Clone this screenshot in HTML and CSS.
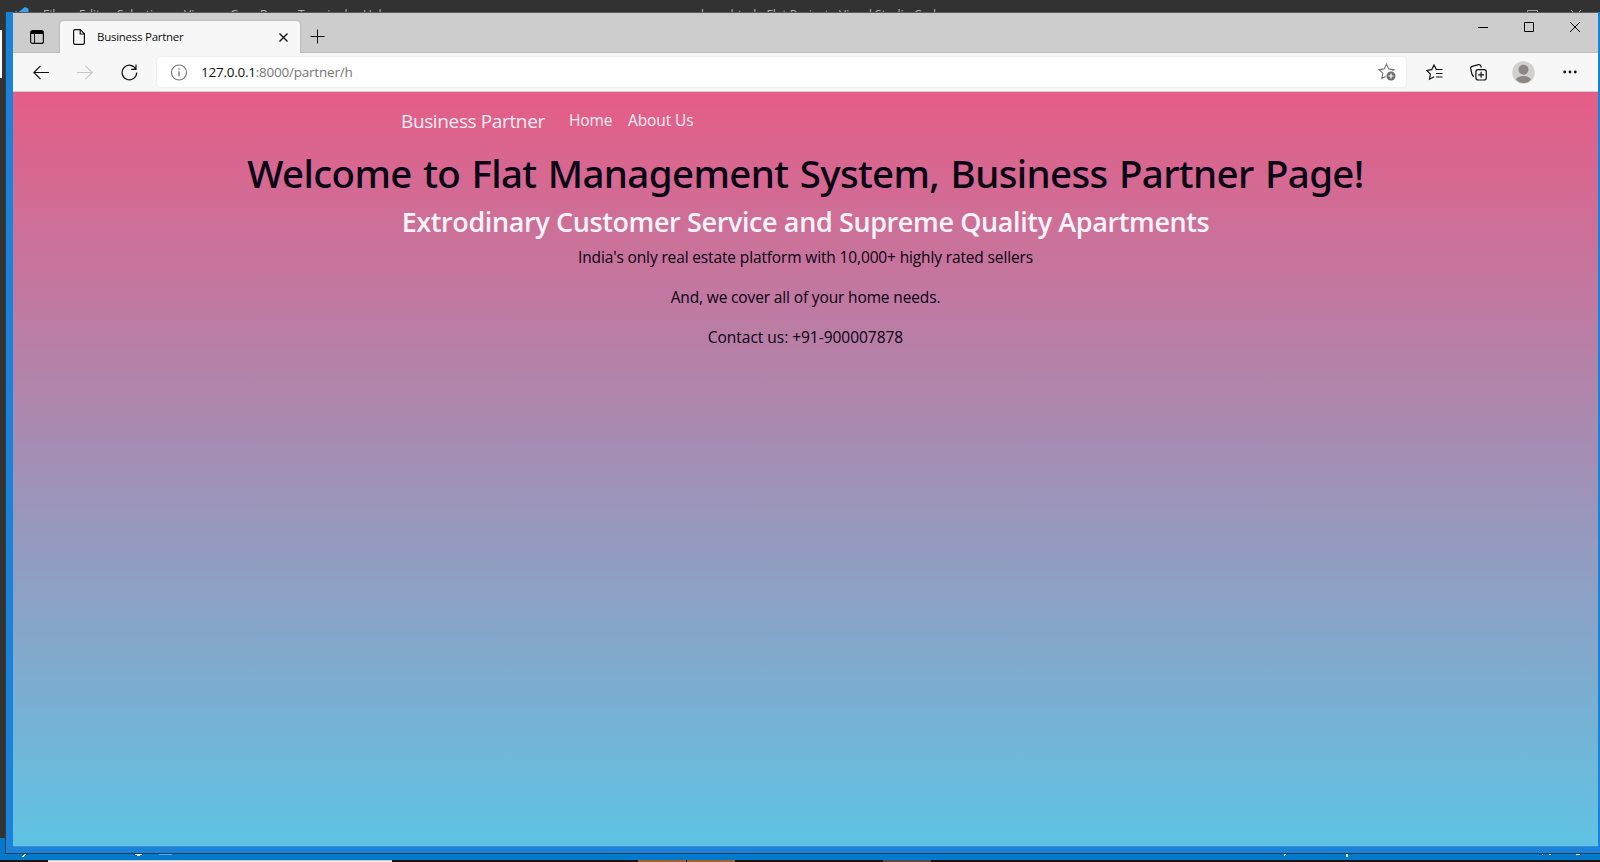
FILE: index.html
```html
<!DOCTYPE html>
<html lang="en">
<head>
<meta charset="utf-8">
<title>Business Partner</title>
<link rel="stylesheet" href="styles.css">
</head>
<body>
<div class="desktop">
  <div class="editor">
    <div class="menubar">
      <svg class="code-logo" width="14" height="14" viewBox="0 0 14 14"><path d="M10 0l3.500 1.700v10.600L10 14 3 8.500 1.200 10 0 9.300V4.700L1.200 4 3 5.500z" fill="#3ba3ea"/></svg>
      <span class="m-file">File</span><span class="m-edit">Edit</span><span class="m-selection">Selection</span><span class="m-view">View</span><span class="m-go">Go</span><span class="m-run">Run</span><span class="m-terminal">Terminal</span><span class="m-help">Help</span>
      <span class="editor-title">base.html - Flat Project - Visual Studio Code</span>
      <svg width="60" height="12" viewBox="0 0 60 12" fill="none" stroke="#a5a5a5"><path d="M2.500.500h10v8h-10zM46 0l9 9M56 0l-9 9"/></svg>
    </div>
    <div class="editor-body"><div class="activity-mark"></div></div>
    <div class="statusbar">
      <svg width="1600" height="4" viewBox="0 0 1600 4"><path d="M24 0h2v1h-1v1h-1v1h-2v-1h1v-1h1zM135 0h7v1h-2v1h-3v-1h-2zM1346 0h2v3h-2zM1284 0h2v1h-1v1h-1zM1542 0h1v1h-1zM1549 0h2v1h-2zM1576 0h4v1h-4z" fill="#fff"/><path d="M159 0h13v1h-13z" fill="#5fa9df"/></svg>
    </div>
    <div class="taskbar"><i class="search"></i><i class="task"></i><i class="task"></i><i class="task dim"></i></div>
  </div>

  <div class="browser">
    <div class="frame-left"></div>
    <div class="browser-main">
      <header class="titlebar">
        <svg class="workspaces" width="14" height="14" viewBox="0 0 14 14"><rect x=".6" y=".6" width="12.800" height="12.800" rx="2" fill="none" stroke="#111" stroke-width="1.200"/><path d="M1 4V2q0-1.500 1.500-1.500h9Q13 .5 13 2v2z" fill="#000"/><path d="M4.500 4v9" stroke="#111" stroke-width="1"/></svg>
        <div class="tab">
          <svg width="12" height="16" viewBox="0 0 12 16" fill="none" stroke="#111" stroke-width="1.200"><path d="M2 .6h5.300l4.100 4.200V14q0 1.400-1.400 1.400H2Q.6 15.400.6 14V2Q.6.6 2 .6zM7.200.8V5h4.200"/></svg>
          <span class="tab-title">Business Partner</span>
          <svg width="9" height="9" viewBox="0 0 9 9" stroke="#111" stroke-width="1.400"><path d="M.5.500l8 8M8.500.500l-8 8"/></svg>
        </div>
        <svg class="new-tab" width="15" height="15" viewBox="0 0 15 15" stroke="#111"><path d="M.5 7.500h14M7.500.500v14"/></svg>
        <div class="window-buttons">
          <svg width="10" height="10" viewBox="0 0 10 10" stroke="#000"><path d="M0 5.500h10"/></svg>
          <svg width="10" height="10" viewBox="0 0 10 10" fill="none" stroke="#000"><path d="M.5.500h9v9h-9z"/></svg>
          <svg width="10" height="10" viewBox="0 0 10 10" stroke="#000"><path d="M0 0l10 10M10 0L0 10"/></svg>
        </div>
      </header>
      <div class="toolbar">
        <span class="tool"><svg width="16" height="15" viewBox="0 0 16 15" fill="none" stroke="#111" stroke-width="1.200"><path d="M16 7.500H.8M7.500.800L.8 7.500l6.700 6.700"/></svg></span>
        <span class="tool"><svg width="16" height="15" viewBox="0 0 16 15" fill="none" stroke="#c8c8c8" stroke-width="1.200"><path d="M0 7.500h15.200M8.500.800l6.700 6.700-6.700 6.700"/></svg></span>
        <span class="tool"><svg width="17" height="17" viewBox="0 0 17 17" fill="none" stroke="#111" stroke-width="1.200"><path d="M15 5.400A7.300 7.300 0 1 0 15.700 8.500M15 .500v4.900h-4.900"/></svg></span>
        <div class="address">
          <svg width="17" height="17" viewBox="0 0 17 17"><circle cx="8" cy="8.500" r="7.500" fill="none" stroke="#767676" stroke-width="1.100"/><path d="M8 7.200v5.200M8 4.300v1.500" stroke="#767676" stroke-width="1.300"/></svg>
          <span class="url"><span class="host">127.0.0.1</span><span class="path">:8000/partner/h</span></span>
          <svg width="18" height="18" viewBox="0 0 18 18"><path d="M8.500 1.200l2.200 4.700 5.200.7-3.800 3.600.9 5.200-4.500-2.500-4.600 2.500.9-5.200L1 6.600l5.200-.7z" fill="none" stroke="#767676" stroke-width="1.100"/><circle cx="13" cy="13" r="5.400" fill="#fff"/><circle cx="13" cy="13" r="4.500" fill="#6e6e6e"/><path d="M10.500 13h5M13 10.500v5" stroke="#fff" stroke-width="1.200"/></svg>
        </div>
        <span class="tool fav"><svg width="17" height="17" viewBox="0 0 17 17" fill="none" stroke="#111" stroke-width="1.200"><path d="M16.500 5.500H10.300L8 1 5.700 5.700.8 6.500l3.600 3.600L3.500 15.200l4.700-2.500M10 9.500h6.500M10 13h6.500"/></svg></span>
        <span class="tool"><svg width="17" height="17" viewBox="0 0 17 17" fill="none" stroke="#111" stroke-width="1.200"><path d="M4 12.500Q2.300 11.800 1.900 10L.7 4.700Q.3 2.800 2.200 2.300L8.400.700q1.900-.4 2.400 1.300l.5 1.700"/><rect x="5.900" y="5.600" width="10.400" height="10.400" rx="2.200"/><path d="M11.100 7.800v6M8.100 10.800h6"/></svg></span>
        <span class="tool wide"><svg width="23" height="23" viewBox="0 0 23 23"><circle cx="11.500" cy="11.500" r="11.300" fill="#d2d0cd"/><circle cx="11.500" cy="8.700" r="5" fill="#8a8785"/><path d="M3.800 18.300Q6.500 15 11.500 15t7.700 3.300Q16.500 22 11.500 22t-7.700-3.700z" fill="#8a8785"/></svg></span>
        <span class="tool wide"><svg width="14" height="4" viewBox="0 0 14 4" fill="#111"><circle cx="1.700" cy="2" r="1.400"/><circle cx="7" cy="2" r="1.400"/><circle cx="12.300" cy="2" r="1.400"/></svg></span>
      </div>
      <main class="page">
        <nav class="navbar"><a class="brand">Business Partner</a><a class="link home">Home</a><a class="link">About Us</a></nav>
        <h1>Welcome to Flat Management System, Business Partner Page!</h1>
        <h3>Extrodinary Customer Service and Supreme Quality Apartments</h3>
        <p>India's only real estate platform with 10,000+ highly rated sellers</p>
        <p>And, we cover all of your home needs.</p>
        <p class="contact">Contact us: +91-900007878</p>
      </main>
      <div class="frame-bottom"></div>
    </div>
    <div class="frame-right"></div>
  </div>
</div>
</body>
</html>
```
FILE: styles.css
```css
* { box-sizing: border-box; }
body { margin: 0; font-family: "Open Sans", "Noto Sans", sans-serif; overflow: hidden; }
svg { display: block; flex: none; }
.desktop { position: relative; width: 1600px; height: 862px; overflow: hidden; background: #333; }

/* Editor window and taskbar behind the browser */
.editor { display: flex; flex-direction: column; height: 862px; }
.menubar { height: 30px; background: #323233; display: flex; align-items: flex-start; padding: 7px 0 0 15px; font-size: 12px; line-height: 16px; color: #b0b0b0; white-space: nowrap; }
.menubar svg { margin-top: 3px; }
.code-logo.code-logo { margin: 0 14px 0 0; }
.menubar span { flex: none; }
.m-file { width: 36px; }
.m-edit { width: 38px; }
.m-selection { width: 67px; }
.m-view { width: 46px; }
.m-go { width: 30px; }
.m-run { width: 38px; }
.m-terminal { width: 65px; }
.m-help { width: 338px; }
.editor-title { width: 824px; }
.editor-body { height: 808px; background: #333; }
.activity-mark { width: 2px; height: 48px; background: #fff; }
.statusbar { height: 22px; padding-top: 16px; background: #007acc; }
.taskbar { height: 2px; background: #151515; display: flex; padding-left: 48px; }
.search { width: 344px; background: #f3f3f3; border-top: 1px solid #c8c8c8; margin-right: 246px; }
.task { width: 48px; background: #a35f2c; margin-right: 1px; }
.dim { background: #4c4c4e; margin-left: 147px; }

/* Browser window */
.browser { position: absolute; left: 5px; top: 12px; width: 1595px; height: 842px; display: flex; border-bottom: 1px solid #1d3d58; }
.frame-left { width: 8px; background: #1a82d8; border-left: 1px solid #2b3d4c; }
.frame-right { width: 2px; background: #1a82d8; }
.frame-bottom { height: 7px; background: #1a82d8; border-top: 1px solid #3f8dcc; }
.browser-main { width: 1585px; display: flex; flex-direction: column; }

.titlebar { height: 41px; background: #cdcdcd; border-top: 1px solid #5b5b5b; border-bottom: 1px solid #bdbdbd; display: flex; align-items: flex-start; padding-left: 17px; }
.workspaces { margin: 17px 16px 0 0; }
.tab { width: 240px; height: 32px; margin-top: 8px; margin-bottom: -1px; background: #f7f7f7; border-radius: 4px 4px 0 0; box-shadow: 0 0 2px #999; clip-path: inset(-2px -2px 0 -2px); display: flex; align-items: center; padding: 0 12px 0 13px; }
.tab-title { flex: 1; margin-left: 12px; font-size: 11.5px; line-height: 16px; letter-spacing: -.26px; color: #111; }
.new-tab { margin: 16px 0 0 10px; }
.window-buttons { display: flex; gap: 36px; margin: 9px 18px 0 auto; }

.toolbar { height: 39px; background: #f7f7f7; border-bottom: 1px solid #cfcfcf; display: flex; align-items: center; padding-left: 6px; }
.tool { width: 44px; display: flex; justify-content: center; }
.wide { width: 46px; }
.wide:last-child { padding-left: 2px; }
.fav { margin-left: 6px; }
.address { width: 1249px; height: 30px; margin-left: 6px; background: #fff; border-radius: 4px; box-shadow: 0 0 2px #ddd; display: flex; align-items: center; padding: 0 10px 0 14px; }
.url { flex: 1; margin-left: 13px; font-size: 13.5px; line-height: 20px; }
.host { color: #111; letter-spacing: -.25px; }
.path { color: #777; letter-spacing: -.22px; }

/* Partner page */
.page { flex: 1; background: linear-gradient(#e55d87, #5fc3e4); text-align: center; color: #0a0014; white-space: nowrap; }
.navbar { height: 56px; display: flex; align-items: center; padding-left: 388px; text-align: left; }
.brand { width: 168px; font-size: 19px; line-height: 30px; letter-spacing: -.37px; color: #fbeef3; margin-top: 1px; }
.link { font-size: 15.5px; line-height: 24px; letter-spacing: -.12px; color: #fbeef3; }
.home { width: 59px; }
h1 { margin: 1px 0 8px; font-family: "Noto Sans", "Open Sans", sans-serif; font-size: 38.5px; line-height: 48px; font-weight: 500; letter-spacing: -.64px; word-spacing: 2px; }
h3 { margin: 0 0 7px; font-size: 27px; line-height: 33px; font-weight: 600; letter-spacing: -.39px; color: #faf3f8; }
p { margin: 0 0 16px; font-size: 15.5px; line-height: 24px; letter-spacing: -.14px; }
.contact { letter-spacing: -.03px; }
```
